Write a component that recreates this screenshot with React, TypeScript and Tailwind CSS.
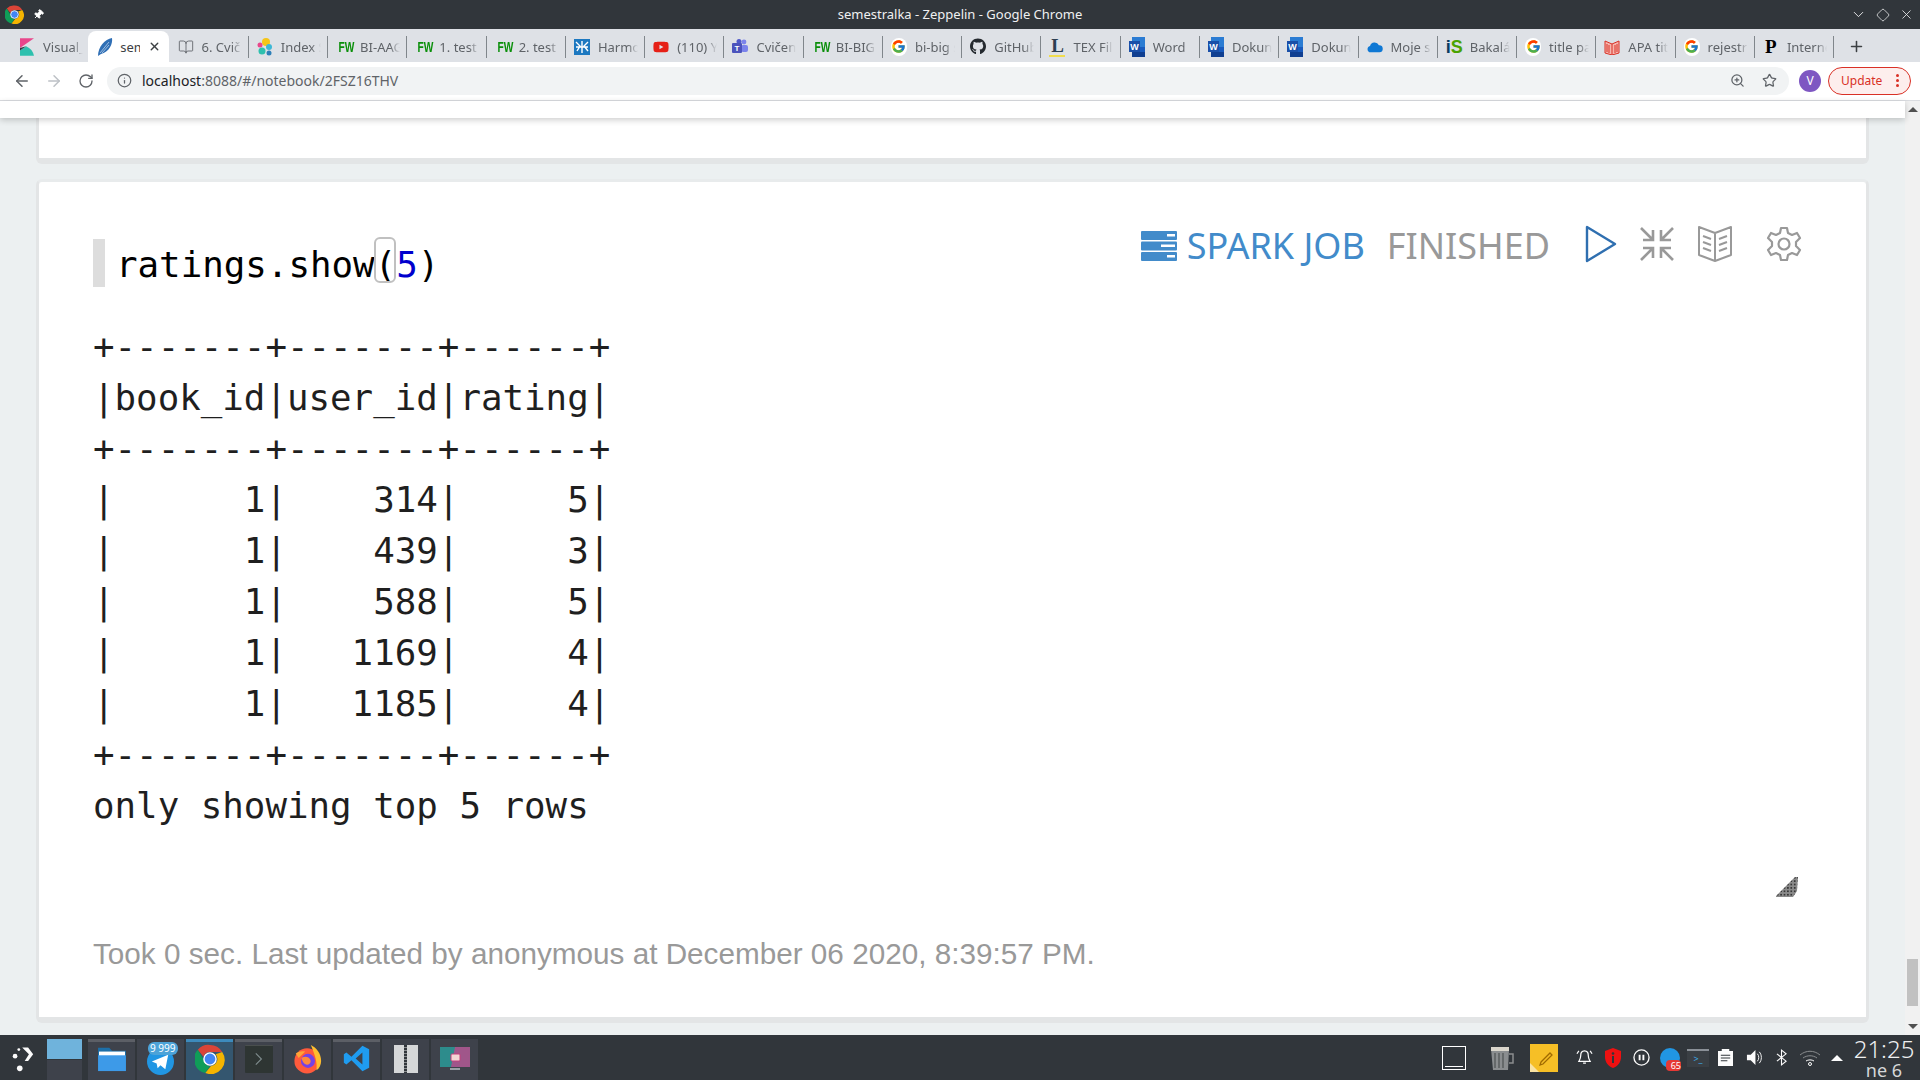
import type { ReactNode } from "react";
import { FcGoogle } from "react-icons/fc";
import { FaGithub, FaYoutube } from "react-icons/fa";
import {
  ArrowLeft,
  ArrowRight,
  RotateCw,
  Info,
  ZoomIn,
  Star,
  X,
  Plus,
  ChevronDown,
  Diamond,
  Pin,
  BookOpen,
} from "lucide-react";

const Fw = () => (
  <span className="font-['Liberation_Sans',sans-serif] text-[15px] font-bold text-[#0a8f0a] scale-x-[.68] w-[16px] inline-block text-center">
    FW
  </span>
);

const WordIcon = () => (
  <svg viewBox="0 0 16 20" className="w-[16px] h-[20px]">
    <rect x="3" y="0" width="13" height="20" fill="#2b7cd3" />
    <rect x="3" y="10" width="13" height="5" fill="#185abd" />
    <rect x="3" y="15" width="13" height="5" fill="#103f91" />
    <rect x="0" y="4" width="11" height="11" fill="#1a4fa8" />
    <text x="5.5" y="12.5" fontSize="9" fontWeight="700" fill="#fff" textAnchor="middle" fontFamily="Liberation Sans">
      W
    </text>
  </svg>
);

const GoogleChip = () => (
  <span className="w-[18px] h-[18px] rounded-full bg-white flex items-center justify-center">
    <FcGoogle size={15} />
  </span>
);

const tabs: { label: string; icon: ReactNode }[] = [
  {
    label: "Visual_",
    icon: (
      <svg viewBox="0 0 16 20" className="w-[14px] h-[20px]">
        <path d="M0 0h16L0 11z" fill="#e8478b" />
        <path d="M0 14 7 9c5 2 8 6 9 11H0z" fill="#2ec0ae" />
        <path d="M0 11 7 9 0 14z" fill="#343741" />
      </svg>
    ),
  },
  { label: "sem", icon: null },
  { label: "6. Cvič", icon: <BookOpen size={16} strokeWidth={1.3} color="#5f6368" /> },
  {
    label: "Index S",
    icon: (
      <svg viewBox="0 0 16 18" className="w-[16px] h-[18px]">
        <circle cx="9" cy="4" r="4" fill="#f5c518" />
        <circle cx="3" cy="7" r="2.5" fill="#e8478b" />
        <circle cx="12" cy="9" r="3" fill="#3db8d6" />
        <circle cx="5" cy="13" r="3.5" fill="#2ec0ae" />
        <circle cx="12" cy="15" r="2.5" fill="#2d7fb8" />
      </svg>
    ),
  },
  { label: "BI-AAG", icon: <Fw /> },
  { label: "1. test", icon: <Fw /> },
  { label: "2. test", icon: <Fw /> },
  {
    label: "Harmo",
    icon: (
      <svg viewBox="0 0 16 16" className="w-[16px] h-[16px]">
        <rect width="16" height="16" fill="#1c78c0" />
        <path d="M2 3 6 7 3 12M8 2v12M14 3l-4 4 4 5M2 8h12" stroke="#fff" strokeWidth="1.4" fill="none" />
      </svg>
    ),
  },
  { label: "(110) Y", icon: <FaYoutube size={16} color="#e62117" /> },
  {
    label: "Cvičen",
    icon: (
      <svg viewBox="0 0 16 16" className="w-[16px] h-[16px]">
        <circle cx="12" cy="3" r="2.4" fill="#7b83eb" />
        <rect x="9" y="6" width="7" height="7" rx="2" fill="#7b83eb" />
        <circle cx="7" cy="2.5" r="2.5" fill="#5059c9" />
        <rect x="0" y="4" width="10" height="10" rx="1" fill="#4b53bc" />
        <text x="5" y="12" fontSize="8" fontWeight="700" fill="#fff" textAnchor="middle" fontFamily="Liberation Sans">
          T
        </text>
      </svg>
    ),
  },
  { label: "BI-BIG", icon: <Fw /> },
  { label: "bi-big s", icon: <GoogleChip /> },
  { label: "GitHub", icon: <FaGithub size={17} color="#24292e" /> },
  {
    label: "TEX File",
    icon: (
      <span className="w-[16px] text-center font-['Liberation_Serif',serif] text-[19px] leading-[18px] font-bold text-[#2c3e50] border-b-2 border-[#f0dc4e]">
        L
      </span>
    ),
  },
  { label: "Word", icon: <WordIcon /> },
  { label: "Dokun", icon: <WordIcon /> },
  { label: "Dokun", icon: <WordIcon /> },
  {
    label: "Moje s",
    icon: (
      <svg viewBox="0 0 18 12" className="w-[16px] h-[12px]">
        <path d="M4 12a3.6 3.6 0 0 1-.6-7.1A5.4 5.4 0 0 1 13.4 4 4 4 0 0 1 14 12z" fill="#0f78d4" />
      </svg>
    ),
  },
  {
    label: "Bakalá",
    icon: (
      <span className="w-[16px] text-center font-['Liberation_Sans',sans-serif] text-[18px] leading-[18px] font-bold text-[#0a3d62]">
        i<span className="text-[#4aa300]">S</span>
      </span>
    ),
  },
  { label: "title pa", icon: <GoogleChip /> },
  {
    label: "APA tit",
    icon: (
      <svg viewBox="0 0 16 16" className="w-[16px] h-[16px]">
        <path d="M1 2l7 3 7-3v12l-7 2-7-2z" fill="#f6b5ad" stroke="#d93025" strokeWidth="1" />
        <path d="M8 5v11M3 5v8M5 6v8M11 6v8M13 5v8" stroke="#d93025" strokeWidth="1" />
      </svg>
    ),
  },
  { label: "rejestr", icon: <GoogleChip /> },
  {
    label: "Interne",
    icon: (
      <span className="w-[16px] text-center font-['Liberation_Serif',serif] text-[19px] leading-[18px] font-bold text-black">
        P
      </span>
    ),
  },
];

const output = [
  "+-------+-------+------+",
  "|book_id|user_id|rating|",
  "+-------+-------+------+",
  "|      1|    314|     5|",
  "|      1|    439|     3|",
  "|      1|    588|     5|",
  "|      1|   1169|     4|",
  "|      1|   1185|     4|",
  "+-------+-------+------+",
  "only showing top 5 rows",
];

const Tab = ({ label, icon, index }: { label: string; icon: ReactNode; index: number }) => {
  if (index === 1) {
    return (
      <div className="w-[81px] shrink-0 h-full bg-white rounded-t-lg flex items-center pl-[9px] gap-[7px] -ml-[2px] mr-[.3px] relative text-[#3c4043]">
        <svg viewBox="0 0 16 20" className="w-[16px] h-[20px]">
          <path d="M1 19C1 10 8 2 15 1c1 6-3 14-11 16z" fill="#2f6fb5" />
          <path d="M3 16 12 5M5 16l7-8" stroke="#cfe0f3" strokeWidth=".7" />
        </svg>
        <span className="w-[20px] overflow-hidden whitespace-nowrap leading-[18px]">{label}</span>
        <X size={13} strokeWidth={2.5} className="ml-[1px]" />
      </div>
    );
  }
  return (
    <div className="w-[79.27px] shrink-0 h-[22px] flex items-center pl-[8px] gap-[8px] border-r border-[#80868b] text-[#5f6368] [&:nth-child(1)]:border-r-0 [&:nth-child(2)]:border-r-0">
      <span className="w-[16px] h-[20px] shrink-0 flex items-center justify-center">{icon}</span>
      <span className="w-[40px] overflow-hidden whitespace-nowrap leading-[18px] [mask-image:linear-gradient(to_right,black_75%,transparent)]">
        {label}
      </span>
    </div>
  );
};

const ServerIcon = () => (
  <svg viewBox="0 0 36 30" className="w-[36px] h-[30px]">
    <rect x="0" y="0" width="36" height="9" rx="1" fill="#428bca" />
    <rect x="0" y="10.5" width="36" height="9" rx="1" fill="#428bca" />
    <rect x="0" y="21" width="36" height="9" rx="1" fill="#428bca" />
    <rect x="26" y="3" width="8" height="2.5" fill="#fff" />
    <rect x="20" y="13.5" width="14" height="2.5" fill="#fff" />
    <rect x="26" y="24" width="8" height="2.5" fill="#fff" />
  </svg>
);

const DottedHandle = () => (
  <svg viewBox="0 0 22 22" className="absolute right-[68px] bottom-[119px] w-[22px] h-[22px]">
    <defs>
      <pattern id="dots" width="3.4" height="3.4" patternUnits="userSpaceOnUse">
        <rect width="3.4" height="3.4" fill="#8a8a8a" />
        <circle cx="1.7" cy="1.7" r="0.9" fill="#222" />
      </pattern>
    </defs>
    <path d="M0 20 19 1l3 0-1 14-4 6H0z" fill="url(#dots)" />
  </svg>
);

const Chrome = ({ size }: { size: string }) => (
  <svg viewBox="0 0 32 32" className={size}>
    <path d="M16 1a15 15 0 0 1 13 7.500H16a7.500 7.500 0 0 0-7 5L3 6A15 15 0 0 1 16 1z" fill="#db4437" />
    <path d="M3 6l6.500 11A7.500 7.500 0 0 0 16 23.500L11 31A15 15 0 0 1 3 6z" fill="#0f9d58" />
    <path d="M29 8.500A15 15 0 0 1 11 31l6-7.600A7.500 7.500 0 0 0 22 11z" fill="#f4b400" />
    <circle cx="16" cy="16" r="6.500" fill="#4285f4" stroke="#fff" strokeWidth="1.500" />
  </svg>
);

const TaskSlot = ({ children, top, active }: { children: ReactNode; top?: boolean; active?: boolean }) => (
  <div
    className={`w-[47px] h-[41px] flex items-center justify-center border-t-[3px] pb-[5px] ${
      active ? "bg-[#34566f] border-[#3d8bbd]" : top ? "bg-[#3e424b] border-[#5c5f66]" : "bg-[#3e424b] border-[#3e424b]"
    }`}
  >
    {children}
  </div>
);

export default function App() {
  return (
    <div className="w-[1920px] h-[1080px] overflow-hidden flex flex-col bg-[#ecf0f1] font-['Noto_Sans',sans-serif]">
      {/* window title */}
      <div className="h-[29px] shrink-0 bg-[#31363b] flex items-center relative pl-[5px] pr-[5px] text-white">
        <Chrome size="w-[19px] h-[19px]" />
        <Pin size={11} className="ml-[9px] rotate-45 fill-white" />
        <span className="absolute left-0 right-0 text-center text-[13px] text-[#eff0f1]">
          semestralka - Zeppelin - Google Chrome
        </span>
        <div className="ml-auto flex items-center gap-[9px] pr-[1px] text-[#eff0f1]">
          <ChevronDown size={17} strokeWidth={1.3} />
          <Diamond size={14} strokeWidth={1.3} />
          <X size={15} strokeWidth={1.3} />
        </div>
      </div>

      {/* tab strip */}
      <div className="h-[33px] shrink-0 bg-[#dee1e6] flex items-end pl-[11px] text-[13px] leading-none">
        <div className="flex items-center h-[31px] w-full">
          {tabs.map((t, i) => (
            <Tab key={i} index={i} label={t.label} icon={t.icon} />
          ))}
          <Plus size={17} strokeWidth={2.2} className="ml-[14px] text-[#3c4043]" />
        </div>
      </div>

      {/* toolbar */}
      <div className="h-[39px] shrink-0 bg-white border-b border-[#dadce0] flex items-center pl-[13px] pr-[8px] pb-[1px] text-[#5f6368]">
        <ArrowLeft size={18} />
        <ArrowRight size={18} className="ml-[14px] text-[#bdc1c6]" />
        <RotateCw size={16} className="ml-[15px]" />
        <div className="ml-[13px] w-[1682px] h-[28px] rounded-full bg-[#f1f3f4] flex items-center pl-[10px] pr-[10px]">
          <Info size={15} />
          <span className="ml-[10px] text-[14px] text-[#5f6368]">
            <span className="text-[#202124]">localhost</span>:8088/#/notebook/2FSZ16THV
          </span>
          <ZoomIn size={15} className="ml-auto" />
          <Star size={15} className="ml-[17px] mr-[2px]" />
        </div>
        <div className="ml-[10px] w-[22px] h-[22px] rounded-full bg-[#7e57c2] text-white text-[12px] flex items-center justify-center">
          V
        </div>
        <div className="ml-[7px] w-[83px] h-[28px] rounded-full border border-[#d93025] bg-[#fdeeed] flex items-center pl-[12px] text-[#d93025] text-[12px]">
          Update
          <span className="ml-[14px] flex flex-col gap-[2px]">
            <i className="w-[3px] h-[3px] rounded-full bg-[#d93025]" />
            <i className="w-[3px] h-[3px] rounded-full bg-[#d93025]" />
            <i className="w-[3px] h-[3px] rounded-full bg-[#d93025]" />
          </span>
        </div>
      </div>

      {/* page */}
      <div className="flex-1 min-h-0 flex">
        <div className="flex-1 min-w-0 flex flex-col">
          <div className="h-[17px] shrink-0 bg-white shadow-[0_2px_6px_rgba(0,0,0,0.2)] relative z-10" />
          <div className="ml-[36px] w-[1833px] h-[46px] shrink-0 bg-white rounded-b-md border-x-[3px] border-b-[6px] border-[#e3e5e6]" />
          <div className="relative mt-[15px] ml-[36px] w-[1833px] h-[844px] shrink-0 bg-white rounded-md border-[3px] border-t-[#e8ebec] border-x-[#e3e5e6] border-b-[6px] border-b-[#e3e5e6]">
            <div className="flex justify-between items-start pl-[55px] pr-[64px] pt-[57px]">
              <div className="flex items-center h-[48px] -ml-[1px]">
                <div className="w-[12px] h-[48px] bg-[#dddddd]" />
                <code className="ml-[11px] font-['DejaVu_Sans_Mono',monospace] text-[35.8px] leading-[48px] text-black relative top-[2px]">
                  ratings.show
                  <span className="relative">
                    (
                    <i className="absolute -left-[1px] top-[-7px] w-[22px] h-[46px] rounded-md border-2 border-[#c0c0c0]" />
                  </span>
                  <span className="text-[#0000cd]">5</span>)
                </code>
              </div>
              <div className="flex items-center -mt-[17px] h-[48px]">
                <ServerIcon />
                <span className="ml-[10px] text-[36px] text-[#428bca] leading-none">SPARK JOB</span>
                <span className="ml-[22px] text-[36px] text-[#999] leading-none">FINISHED</span>
                <svg viewBox="0 0 32 38" className="ml-[35px] w-[32px] h-[38px] -mt-[5px]" fill="none" stroke="#2f6fb0" strokeWidth="2.4" strokeLinejoin="round">
                  <path d="M2 2v34L30 19z" />
                </svg>
                <svg viewBox="0 0 36 36" className="ml-[22px] w-[36px] h-[36px] -mt-[5px]" fill="none" stroke="#999" strokeWidth="2.6">
                  <path d="M2 2l12 12M14 4v10H4M34 2L22 14M22 4v10h10M2 34l12-12M4 22h10v10M34 34L22 22M32 22H22v10" />
                </svg>
                <svg viewBox="0 0 36 36" className="ml-[22px] w-[36px] h-[36px] -mt-[5px]" fill="none" stroke="#999" strokeWidth="2" strokeLinejoin="round">
                  <path d="M18 7 2 1v28l16 6 16-6V1zM18 7v28M6 10l8 3M6 16l8 3M6 22l8 3M30 10l-8 3M30 16l-8 3M30 22l-8 3" />
                </svg>
                <svg viewBox="0 0 36 36" className="ml-[33px] w-[36px] h-[36px] -mt-[5px]" fill="none" stroke="#999" strokeWidth="2.2" strokeLinejoin="round">
                  <circle cx="18" cy="18" r="5.500" />
                  <path d="M15 2h6l1 5 4 2 5-2 3 5-4 4v4l4 4-3 5-5-2-4 2-1 5h-6l-1-5-4-2-5 2-3-5 4-4v-4l-4-4 3-5 5 2 4-2z" />
                </svg>
              </div>
            </div>

            <pre className="mt-[34px] pl-[54px] font-['DejaVu_Sans_Mono',monospace] text-[35.8px] leading-[51px] text-[#1f1f1f]">
              {output.join("\n")}
            </pre>

            <DottedHandle />

            <p className="mt-[103px] pl-[54px] font-['Liberation_Sans',sans-serif] text-[29.7px] leading-[40px] text-[#999]">
              Took 0 sec. Last updated by anonymous at December 06 2020, 8:39:57 PM.
            </p>
          </div>
        </div>

        {/* scrollbar */}
        <div className="w-[15px] shrink-0 bg-[#f1f1f1] flex flex-col items-center pt-[6px] pb-[6px]">
          <i className="w-0 h-0 border-x-[5px] border-x-transparent border-b-[5px] border-b-[#505050]" />
          <div className="flex-1" />
          <div className="w-[11px] h-[47px] bg-[#c1c1c1]" />
          <div className="h-[18px]" />
          <i className="w-0 h-0 border-x-[5px] border-x-transparent border-t-[5px] border-t-[#505050]" />
        </div>
      </div>

      {/* taskbar */}
      <div className="h-[45px] shrink-0 bg-[#31363b] flex items-center text-[#eff0f1] pl-[10px]">
        <svg viewBox="0 0 28 32" className="w-[27px] h-[30px]">
          <path d="M14 3l7 0 6 8-6 8-4 0 5-8z" fill="#fcfcfc" transform="translate(0 2) scale(.9)" />
          <circle cx="5" cy="14" r="2.500" fill="#fcfcfc" />
          <circle cx="9" cy="7" r="1.500" fill="#fcfcfc" />
          <circle cx="10" cy="27" r="3" fill="#fcfcfc" />
        </svg>
        <div className="ml-[10px] w-[35px] h-[41px] flex flex-col self-end">
          <div className="h-[20px] bg-[#6fb3dc]" />
          <div className="mt-[1px] flex-1 bg-[#3e424b]" />
        </div>
        <div className="ml-[6px] flex gap-[2px] self-end">
          <TaskSlot top>
            <svg viewBox="0 0 32 28" className="w-[30px] h-[26px]">
              <path d="M1 2h12l3 3h15v22H1z" fill="#1d6fa8" />
              <rect x="2" y="6" width="28" height="5" fill="#fff" />
              <path d="M1 10h30v17H1z" fill="#3d9ae8" />
            </svg>
          </TaskSlot>
          <TaskSlot>
            <span className="relative w-[32px] h-[32px] flex items-end justify-center">
              <svg viewBox="0 0 28 28" className="w-[27px] h-[27px]">
                <circle cx="14" cy="14" r="14" fill="#2196e3" />
                <path d="M5 14l17-7-3 15-5-4-3 3-1-5z" fill="#fff" />
              </svg>
              <span className="absolute -top-[1px] -right-[1px] h-[13px] px-[2px] rounded-md bg-[#4ca3d8] text-white text-[10px] leading-[13px] whitespace-nowrap">
                9 999
              </span>
            </span>
          </TaskSlot>
          <TaskSlot active>
            <Chrome size="w-[30px] h-[30px]" />
          </TaskSlot>
          <TaskSlot top>
            <div className="w-[28px] h-[28px] bg-[#2e3533] rounded-[1px] flex items-center justify-center border-t border-[#4a4f4e]">
              <svg viewBox="0 0 10 16" className="w-[8px] h-[14px]" fill="none" stroke="#7f8c8d" strokeWidth="1.400">
                <path d="M1 1l7 7-7 7" />
              </svg>
            </div>
          </TaskSlot>
          <TaskSlot>
            <svg viewBox="0 0 32 32" className="w-[30px] h-[30px]">
              <circle cx="15" cy="18" r="13.500" fill="#ff5a3c" />
              <path d="M19 1c6 3 11 9 11 17 0 4-2 8-5 10 1-8-1-15-6-27z" fill="#ffbd2e" />
              <path d="M3 10c3-2 6-3 10-2L6 15z" fill="#ffa436" />
              <circle cx="16" cy="18" r="7.500" fill="#7542e5" />
              <path d="M9 15c3-2 7-2 9 1s0 6-3 6-5-3-6-7z" fill="#ff8a3c" />
            </svg>
          </TaskSlot>
          <TaskSlot top>
            <svg viewBox="0 0 32 32" className="w-[27px] h-[27px]">
              <path d="M23 1l8 4v22l-8 4-13-13-6 5-3-2v-10l3-2 6 5zM23 9l-8 7 8 7z" fill="#1f9cf0" fillRule="evenodd" />
            </svg>
          </TaskSlot>
          <TaskSlot>
            <div className="w-[24px] h-[28px] bg-[#d5d7d8] flex justify-center">
              <div className="w-[3px] h-full bg-[repeating-linear-gradient(to_bottom,#31363b_0,#31363b_2px,#8a8d8f_2px,#8a8d8f_3px)]" />
            </div>
          </TaskSlot>
          <TaskSlot>
            <svg viewBox="0 0 32 26" className="w-[32px] h-[26px]">
              <rect x="1" y="1" width="30" height="20" fill="#2d8c8c" />
              <path d="M16 1h15v20H12z" fill="#a0568a" />
              <rect x="12" y="8" width="9" height="7" rx="1" fill="#f4d5d5" stroke="#c2417c" />
              <rect x="11" y="22" width="10" height="2" fill="#9aa0a6" />
            </svg>
          </TaskSlot>
        </div>

        {/* tray */}
        <div className="ml-auto flex items-center">
          <div className="w-[24px] h-[24px] border border-white flex items-end px-[2px] pb-[2px]">
            <div className="w-full h-[1px] bg-white" />
          </div>
          <svg viewBox="0 0 26 26" className="ml-[23px] w-[26px] h-[26px]">
            <path d="M2 4h18l-1 21H4z" fill="#8a8d8f" />
            <path d="M20 9h4v9h-4" fill="none" stroke="#8a8d8f" strokeWidth="1.500" />
            <path d="M2 2h18v4H2z" fill="#dad6cc" />
            <path d="M6 8v15M10 8v15M14 8v15" stroke="#5a5d5f" strokeWidth="1.500" />
          </svg>
          <svg viewBox="0 0 28 28" className="ml-[15px] w-[28px] h-[28px]">
            <rect width="28" height="28" fill="#f6bf26" />
            <path d="M0 19l9 9H0z" fill="#f9e3a3" />
            <path d="M11 18l9-9 2 2-9 9-3 1z" fill="none" stroke="#a06a00" strokeWidth="1.300" />
          </svg>
          <svg viewBox="0 0 18 18" className="ml-[18px] w-[17px] h-[17px]" fill="none" stroke="#fcfcfc" strokeWidth="1.300">
            <path d="M9 2c-3 0-4 2-4 5 0 3-1 4-2 6h12c-1-2-2-3-2-6 0-3-1-5-4-5zM7.500 15h3M1 5l2-3M17 5l-2-3" />
          </svg>
          <svg viewBox="0 0 18 20" className="ml-[11px] w-[18px] h-[20px]">
            <path d="M9 0l8 3v6c0 5-3 9-8 11-5-2-8-6-8-11V3z" fill="#ee1111" />
            <rect x="8" y="8" width="2" height="7" fill="#31363b" />
            <circle cx="9" cy="5.500" r="1.300" fill="#31363b" />
          </svg>
          <svg viewBox="0 0 18 18" className="ml-[11px] w-[17px] h-[17px]" fill="none" stroke="#fcfcfc" strokeWidth="1.400">
            <circle cx="9" cy="9" r="8" />
            <path d="M7 6v6M11 6v6" strokeWidth="2" />
          </svg>
          <span className="ml-[10px] relative w-[20px] h-[20px] rounded-full bg-[#2196e3]">
            <span className="absolute -right-[1px] -bottom-[3px] h-[11px] w-[15px] bg-[#e53935] rounded-sm text-white text-[9px] leading-[11px] text-right">
              65
            </span>
          </span>
          <div className="ml-[7px] w-[22px] h-[18px] bg-[#3a3f44] border-t-2 border-[#8a9097] flex items-center justify-center text-[9px] text-[#3daee9]">
            &gt;_
          </div>
          <svg viewBox="0 0 16 18" className="ml-[9px] w-[15px] h-[17px]" fill="#fcfcfc">
            <path d="M0 2h4V0h8v2h4v16H0zM3 6v1h10V6zM3 9v1h10V9zM3 12v1h7v-1z" fillRule="evenodd" />
          </svg>
          <svg viewBox="0 0 18 18" className="ml-[13px] w-[17px] h-[17px]" fill="#fcfcfc">
            <path d="M1 6h4l5-5v16l-5-5H1z" />
            <path d="M12 5c2 2 2 6 0 8M14 3c3 3 3 9 0 12" fill="none" stroke="#fcfcfc" strokeWidth="1" />
          </svg>
          <svg viewBox="0 0 12 18" className="ml-[13px] w-[11px] h-[17px]" fill="none" stroke="#fcfcfc" strokeWidth="1.200">
            <path d="M1 5l10 8-5 4V1l5 4L1 13" />
          </svg>
          <svg viewBox="0 0 22 16" className="ml-[12px] w-[22px] h-[16px]" fill="none" stroke="#8a8d8f" strokeWidth="1">
            <path d="M1 5c6-5 14-5 20 0M4 8c4-3 10-3 14 0" />
            <path d="M7 11c2-1.500 6-1.500 8 0" stroke="#fcfcfc" />
            <circle cx="11" cy="14" r="1.500" stroke="#fcfcfc" />
          </svg>
          <i className="ml-[10px] w-0 h-0 border-x-[6px] border-x-transparent border-b-[6px] border-b-[#fcfcfc]" />
          <div className="ml-[12px] mr-[7px] w-[58px] flex flex-col items-center leading-none">
            <span className="text-[24px] font-light leading-[25px]">21:25</span>
            <span className="text-[18px] leading-[18px] text-[#d5d7d8]">ne 6</span>
          </div>
        </div>
      </div>
    </div>
  );
}
